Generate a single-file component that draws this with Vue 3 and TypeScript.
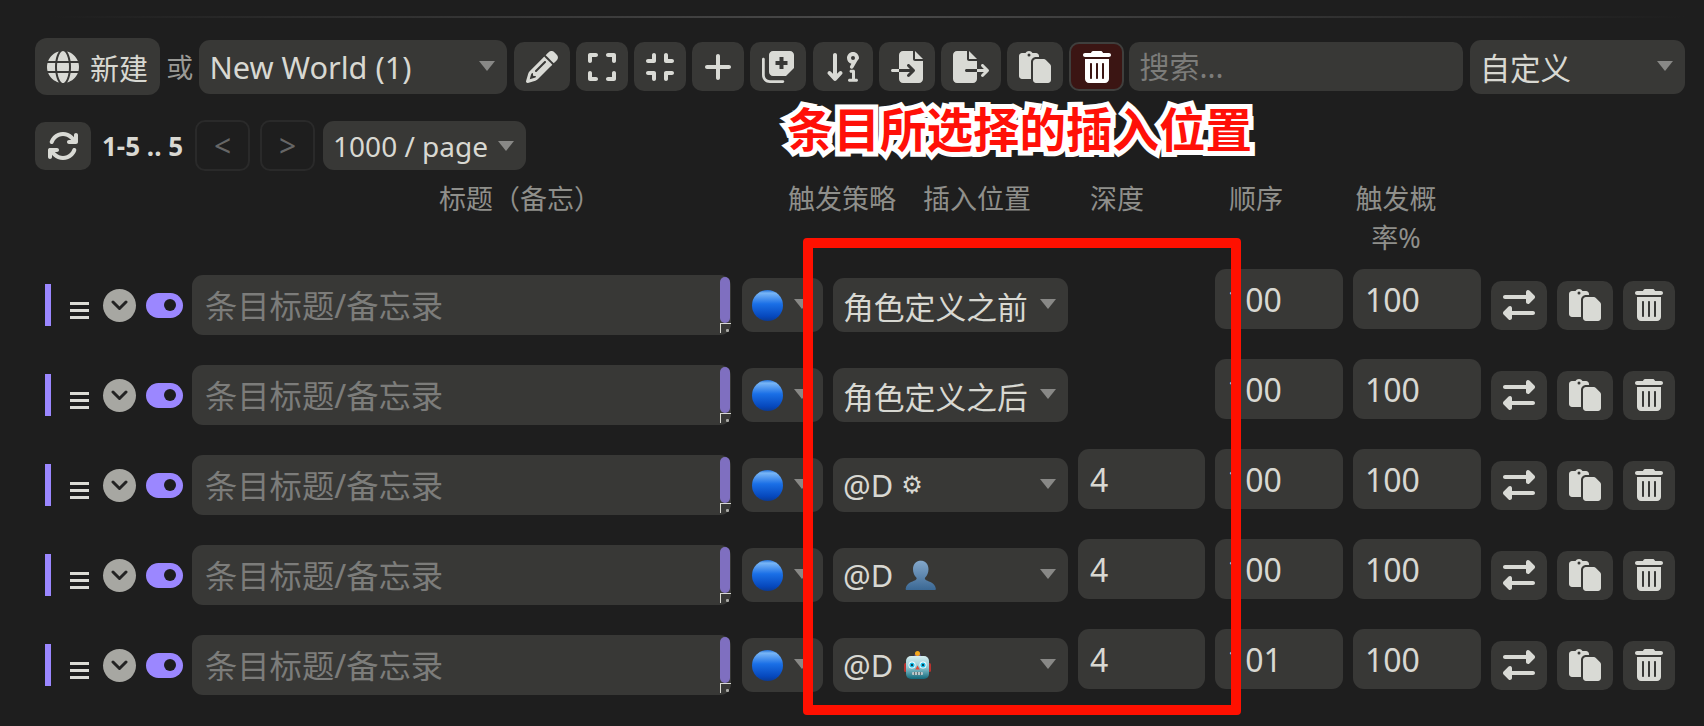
<template>
  <div class="page">
    <div class="top-line"></div>

    <!-- World selector toolbar -->
    <div class="toolbar">
      <button class="btn new-btn">
        <svg :width="32" height="32" :viewBox="`0 0 ${globe.w} 512`"><path :d="globe.d" /></svg>
        <span>新建</span>
      </button>
      <span class="or">或</span>
      <div class="select world-select">
        <span>New World (1)</span>
        <i class="caret"></i>
      </div>
      <button v-for="icon in toolIcons" :key="icon.name" class="btn icon-btn">
        <svg :width="icon.w / 16" height="32" :viewBox="`0 0 ${icon.w} 512`"><path :d="icon.d" fill-rule="evenodd" /></svg>
      </button>
      <button class="btn icon-btn danger">
        <svg :width="trash.w / 16" height="32" :viewBox="`0 0 ${trash.w} 512`"><path :d="trash.d" /></svg>
      </button>
      <input class="search" placeholder="搜索..." />
      <div class="select sort-select">
        <span>自定义</span>
        <i class="caret"></i>
      </div>
    </div>

    <!-- Pagination -->
    <div class="pager">
      <button class="btn icon-btn refresh">
        <svg width="32" height="32" :viewBox="`0 0 ${rotate.w} 512`"><path :d="rotate.d" /></svg>
      </button>
      <span class="range">1-5 .. 5</span>
      <div class="nav-btn first">&lt;</div>
      <div class="nav-btn">&gt;</div>
      <div class="select size-select">
        <span>1000 / page</span>
        <i class="caret"></i>
      </div>
    </div>

    <div class="table-head">
      <span>标题（备忘）</span>
      <span>触发策略</span>
      <span>插入位置</span>
      <span>深度</span>
      <span>顺序</span>
      <span class="prob-head">触发概率%</span>
    </div>

    <div class="entries">
      <div v-for="(entry, i) in entries" :key="i" class="entry">
        <i class="state-bar"></i>
        <span class="drag">
          <i></i><i></i><i></i>
        </span>
        <span class="fold">
          <svg width="17" height="11" viewBox="0 0 17 11"><path d="M2 2l6.500 6.500L15 2" /></svg>
        </span>
        <span class="toggle"><i></i></span>

        <div class="title-box">
          <input class="title-input" placeholder="条目标题/备忘录" />
          <i class="scroll-thumb"></i>
          <i class="resize-grip"></i>
        </div>

        <div class="select strategy">
          <svg class="ball" width="31" height="31" viewBox="0 0 31 31">
            <defs>
              <linearGradient id="ballFill" x1="0" y1="0" x2="0" y2="1">
                <stop offset="0" stop-color="#1f6fd8" />
                <stop offset="0.1" stop-color="#79b6f6" />
                <stop offset="0.45" stop-color="#1a6fe6" />
                <stop offset="0.85" stop-color="#0648bd" />
                <stop offset="1" stop-color="#0a3a94" />
              </linearGradient>
            </defs>
            <circle cx="15.5" cy="15.5" r="15.500" fill="url(#ballFill)" />
          </svg>
          <i class="caret"></i>
        </div>

        <div class="select position">
          <span class="pos-label">
            {{ entry.label }}
            <span v-if="entry.role === 'system'" class="gear">⚙</span>
            <svg v-if="entry.role === 'user'" class="role-icon" width="31" height="31" viewBox="0 0 31 31">
              <defs>
                <linearGradient id="userFill" x1="0" y1="0" x2="0" y2="1">
                  <stop offset="0" stop-color="#84a8cb" />
                  <stop offset="1" stop-color="#3b6894" />
                </linearGradient>
              </defs>
              <path fill="url(#userFill)" d="M15.500 0.500c4.800 0 8 3.800 8 8.800 0 3.400-1.400 6.500-3.300 8.300-.7.800-.3 2 1 2.700 3.300 1.700 8.500 2.500 9.600 8.200 .2 1-.3 1.500-1.200 1.500H1.900c-.9 0-1.400-.5-1.200-1.500 1.100-5.700 6.300-6.500 9.600-8.200 1.300-.7 1.700-1.900 1-2.700-1.900-1.800-3.300-4.900-3.300-8.300 0-5 3.200-8.800 8-8.800z" />
            </svg>
            <svg v-if="entry.role === 'bot'" class="role-icon bot" width="27" height="28" viewBox="0 0 27 28">
              <defs>
                <linearGradient id="botFill" x1="0" y1="0" x2="0" y2="1">
                  <stop offset="0" stop-color="#d6eef0" />
                  <stop offset="0.5" stop-color="#8cc6d0" />
                  <stop offset="1" stop-color="#11687a" />
                </linearGradient>
              </defs>
              <rect x="0" y="12" width="3.500" height="9" rx="1.500" fill="#b8322e" />
              <rect x="23.500" y="12" width="3.500" height="9" rx="1.500" fill="#b8322e" />
              <rect x="10.500" y="3" width="6" height="3" rx="1" fill="#6d54a8" />
              <circle cx="13.500" cy="2.500" r="2.500" fill="#f4a81c" />
              <rect x="2" y="5" width="23" height="23" rx="5" fill="url(#botFill)" />
              <circle cx="8" cy="14" r="3.500" fill="#fff" />
              <circle cx="19" cy="14" r="3.500" fill="#fff" />
              <circle cx="8" cy="14" r="2.600" fill="#1cc3f0" />
              <circle cx="19" cy="14" r="2.600" fill="#1cc3f0" />
              <circle cx="8" cy="14" r="1.200" fill="#12414f" />
              <circle cx="19" cy="14" r="1.200" fill="#12414f" />
              <path d="M13.500 14.500l2.300 4h-4.600z" fill="#e0483a" />
              <rect x="8" y="21" width="11" height="3" rx="1" fill="#b9c6c8" />
              <path d="M10.500 21v3M13.500 21v3M16.500 21v3" stroke="#4b5f64" stroke-width="0.800" fill="none" />
            </svg>
          </span>
          <i class="caret"></i>
        </div>

        <div class="depth-cell">
          <input v-if="entry.depth" class="num" :value="entry.depth" />
        </div>
        <input class="num" :value="entry.order" />
        <input class="num" value="100" />

        <div class="row-actions">
          <button v-for="icon in rowIcons" :key="icon.name" class="btn row-btn">
            <svg :width="icon.w / 16" height="32" :viewBox="`0 0 ${icon.w} 512`"><path :d="icon.d" /></svg>
          </button>
        </div>
      </div>
    </div>

    <!-- Annotation drawn on top of the screenshot -->
    <div class="note">条目所选择的插入位置</div>
    <div class="note-box"></div>
  </div>
</template>

<script setup lang="ts">
interface Icon {
  name: string;
  w: number;
  d: string;
}

interface Entry {
  label: string;
  role?: 'system' | 'user' | 'bot';
  depth?: number;
  order: number;
}

const globe: Icon = {
  name: 'globe',
  w: 512,
  d: 'M352 256c0 22.2-1.2 43.6-3.3 64l-185.3 0c-2.2-20.4-3.3-41.8-3.3-64s1.2-43.6 3.3-64l185.3 0c2.2 20.4 3.3 41.8 3.3 64zm28.8-64l123.1 0c5.3 20.5 8.1 41.9 8.1 64s-2.8 43.5-8.1 64l-123.1 0c2.1-20.6 3.2-42 3.2-64s-1.1-43.4-3.2-64zm112.6-32l-116.7 0c-10-63.9-29.8-117.4-55.3-151.6c78.3 20.7 142 77.5 171.9 151.6zm-149.1 0l-176.6 0c6.1-36.4 15.5-68.6 27-94.7c10.5-23.6 22.2-40.7 33.5-51.5C239.4 3.2 248.7 0 256 0s16.6 3.2 27.8 13.8c11.3 10.8 23 27.9 33.5 51.5c11.6 26 20.9 58.2 27 94.7zm-209 0L18.6 160C48.6 85.9 112.2 29.1 190.6 8.4C165.1 42.6 145.3 96.1 135.3 160zM8.1 192l123.1 0c-2.1 20.6-3.2 42-3.2 64s1.1 43.4 3.2 64L8.1 320C2.8 299.5 0 278.1 0 256s2.8-43.5 8.1-64zM194.7 446.6c-11.6-26-20.9-58.2-27-94.6l176.6 0c-6.1 36.4-15.5 68.6-27 94.6c-10.5 23.6-22.2 40.7-33.5 51.5C272.6 508.8 263.3 512 256 512s-16.6-3.2-27.8-13.8c-11.3-10.8-23-27.9-33.5-51.5zM135.3 352c10 63.9 29.8 117.4 55.3 151.6C112.2 482.9 48.6 426.1 18.6 352l116.7 0zm358.1 0c-30 74.1-93.6 130.9-171.9 151.6c25.5-34.2 45.2-87.7 55.3-151.6l116.7 0z',
};

const trash: Icon = {
  name: 'trash',
  w: 448,
  d: 'M135.2 17.7C140.6 6.8 151.7 0 163.8 0L284.2 0c12.1 0 23.2 6.8 28.6 17.7L320 32l96 0c17.7 0 32 14.3 32 32s-14.3 32-32 32L32 96C14.3 96 0 81.7 0 64S14.3 32 32 32l96 0 7.2-14.3zM32 128l384 0 0 320c0 35.3-28.7 64-64 64L96 512c-35.3 0-64-28.7-64-64l0-320zm96 64c-8.8 0-16 7.2-16 16l0 224c0 8.8 7.2 16 16 16s16-7.2 16-16l0-224c0-8.8-7.2-16-16-16zm96 0c-8.8 0-16 7.2-16 16l0 224c0 8.8 7.2 16 16 16s16-7.2 16-16l0-224c0-8.8-7.2-16-16-16zm96 0c-8.8 0-16 7.2-16 16l0 224c0 8.8 7.2 16 16 16s16-7.2 16-16l0-224c0-8.800-7.2-16-16-16z',
};

const paste: Icon = {
  name: 'paste',
  w: 512,
  d: 'M160 0c-23.7 0-44.4 12.9-55.4 32L48 32C21.5 32 0 53.5 0 80L0 400c0 26.5 21.5 48 48 48l144 0 0-272c0-44.2 35.8-80 80-80l48 0 0-16c0-26.5-21.5-48-48-48l-56.6 0C204.4 12.9 183.7 0 160 0zM272 128c-26.5 0-48 21.5-48 48l0 272 0 16c0 26.500 21.5 48 48 48l192 0c26.5 0 48-21.5 48-48l0-220.1c0-12.7-5.1-24.9-14.1-33.9l-67.9-67.9c-9-9-21.2-14.1-33.9-14.1L320 128l-48 0zM160 40a24 24 0 1 1 0 48 24 24 0 1 1 0-48z',
};

const rotate: Icon = {
  name: 'rotate',
  w: 512,
  d: 'M105.1 202.6c7.7-21.8 20.2-42.3 37.8-59.8c62.5-62.5 163.8-62.5 226.3 0L386.3 160 352 160c-17.7 0-32 14.3-32 32s14.3 32 32 32l111.5 0c0 0 0 0 0 0l.4 0c17.7 0 32-14.3 32-32l0-112c0-17.7-14.3-32-32-32s-32 14.3-32 32l0 35.2L414.4 97.6c-87.5-87.5-229.3-87.5-316.8 0C73.2 122 55.6 150.7 44.8 181.4c-5.9 16.7 2.9 34.9 19.5 40.8s34.9-2.9 40.8-19.5zM39 289.3c-5 1.5-9.8 4.2-13.7 8.2c-4 4-6.7 8.8-8.1 14c-.3 1.2-.6 2.5-.8 3.8c-.3 1.7-.4 3.4-.4 5.1L16 432c0 17.7 14.3 32 32 32s32-14.3 32-32l0-35.1 17.6 17.5c0 0 0 0 0 0c87.5 87.4 229.3 87.4 316.7 0c24.4-24.4 42.1-53.1 52.9-83.8c5.9-16.7-2.9-34.9-19.5-40.8s-34.9 2.9-40.8 19.5c-7.7 21.8-20.2 42.3-37.8 59.8c-62.5 62.5-163.8 62.5-226.3 0l-.1-.1L125.6 352l34.4 0c17.7 0 32-14.3 32-32s-14.3-32-32-32L48.4 288c-1.6 0-3.2 .1-4.8 .3s-3.1 .5-4.6 1z',
};

const toolIcons: Icon[] = [
  {
    name: 'pencil',
    w: 512,
    d: 'M410.3 231l11.3-11.3-33.9-33.9-62.1-62.1L291.7 89.8l-11.3 11.3-22.6 22.6L58.6 322.9c-10.4 10.4-18 23.3-22.2 37.4L1 480.7c-2.5 8.4-.2 17.5 6.1 23.7s15.3 8.5 23.7 6.1l120.3-35.4c14.1-4.2 27-11.8 37.4-22.2L387.7 253.7 410.3 231zM160 399.4l-9.1 22.7c-4 3.1-8.5 5.4-13.3 6.9L59.4 452l23-78.1c1.4-4.9 3.8-9.4 6.9-13.3l22.7-9.1 0 32c0 8.8 7.2 16 16 16l32 0zM362.7 18.7L348.3 33.2 325.7 55.8 314.3 67.1l33.9 33.9 62.1 62.1 33.9 33.9 11.3-11.3 22.6-22.6 14.5-14.5c25-25 25-65.5 0-90.5L453.3 18.7c-25-25-65.5-25-90.5 0zm-47.4 168l-144 144c-6.2 6.2-16.4 6.2-22.6 0s-6.2-16.4 0-22.6l144-144c6.2-6.2 16.4-6.2 22.6 0s6.2 16.4 0 22.6z',
  },
  {
    name: 'expand',
    w: 448,
    d: 'M32 32C14.3 32 0 46.3 0 64l0 96c0 17.7 14.3 32 32 32s32-14.3 32-32l0-64 64 0c17.7 0 32-14.3 32-32s-14.3-32-32-32L32 32zM64 352c0-17.7-14.3-32-32-32s-32 14.3-32 32l0 96c0 17.7 14.3 32 32 32l96 0c17.7 0 32-14.3 32-32s-14.3-32-32-32l-64 0 0-64zM320 32c-17.7 0-32 14.3-32 32s14.3 32 32 32l64 0 0 64c0 17.7 14.3 32 32 32s32-14.3 32-32l0-96c0-17.7-14.3-32-32-32l-96 0zM448 352c0-17.7-14.3-32-32-32s-32 14.3-32 32l0 64-64 0c-17.7 0-32 14.3-32 32s14.3 32 32 32l96 0c17.7 0 32-14.3 32-32l0-96z',
  },
  {
    name: 'compress',
    w: 448,
    d: 'M160 64c0-17.7-14.3-32-32-32s-32 14.3-32 32l0 64-64 0c-17.7 0-32 14.3-32 32s14.3 32 32 32l96 0c17.7 0 32-14.3 32-32l0-96zM32 320c-17.7 0-32 14.3-32 32s14.3 32 32 32l64 0 0 64c0 17.7 14.3 32 32 32s32-14.3 32-32l0-96c0-17.7-14.3-32-32-32l-96 0zM352 64c0-17.7-14.3-32-32-32s-32 14.3-32 32l0 96c0 17.7 14.3 32 32 32l96 0c17.7 0 32-14.3 32-32s-14.3-32-32-32l-64 0 0-64zM320 320c-17.7 0-32 14.3-32 32l0 96c0 17.7 14.3 32 32 32s32-14.3 32-32l0-64 64 0c17.7 0 32-14.3 32-32s-14.3-32-32-32l-96 0z',
  },
  {
    name: 'plus',
    w: 448,
    d: 'M256 80c0-17.7-14.3-32-32-32s-32 14.3-32 32l0 144L48 224c-17.7 0-32 14.3-32 32s14.3 32 32 32l144 0 0 144c0 17.7 14.3 32 32 32s32-14.3 32-32l0-144 144 0c17.7 0 32-14.3 32-32s-14.3-32-32-32l-144 0 0-144z',
  },
  {
    name: 'duplicate',
    w: 512,
    d: 'M176 0h272c35 0 64 29 64 64v208L384 400H176c-35 0-64-29-64-64V64c0-35 29-64 64-64zM280 96v64h-64v64h64v64h64v-64h64v-64h-64V96zM0 128c0-12 10-22 22-22s22 10 22 22v256c0 46 36 82 82 82h208c12 0 22 10 22 22s-10 24-22 24H126C56 512 0 456 0 384z',
  },
  {
    name: 'sort',
    w: 576,
    d: 'M160 480c9 0 17.500-3.800 23.600-10.400l88-96c11.900-13 11.100-33.300-2-45.200s-33.300-11-45.200 2L192 365.700V64c0-17.700-14.300-32-32-32s-32 14.300-32 32v301.700l-32.400-35.300c-12-13-32.200-13.900-45.200-2s-13.900 32.200-2 45.200l88 96C142.500 476.200 151 480 160 480zM448 16c-53 0-96 43-96 96 0 44 30 81 70 92l-20 36c-8 14-3 32 11 40s32 3 40-11l62-108c18-28 29-32 29-49 0-53-43-96-96-96zm0 64a32 32 0 1 1 0 64 32 32 0 1 1 0-64zM416 300h40c13 0 24 11 24 24v120h24c13 0 24 11 24 24s-11 24-24 24H392c-13 0-24-11-24-24s11-24 24-24h40v-96h-16c-13 0-24-11-24-24s11-24 24-24z',
  },
  {
    name: 'import',
    w: 512,
    d: 'M128 64c0-35.300 28.700-64 64-64L352 0l0 128c0 17.700 14.300 32 32 32l128 0 0 288c0 35.300-28.700 64-64 64l-256 0c-35.300 0-64-28.700-64-64l0-112 174.100 0-39 39c-9.400 9.400-9.400 24.600 0 33.900s24.600 9.400 33.900 0l80-80c9.400-9.400 9.400-24.600 0-33.900l-80-80c-9.400-9.400-24.600-9.400-33.900 0s-9.400 24.600 0 33.900l39 39L128 288l0-224zm0 224l0 48L24 336c-13.300 0-24-10.700-24-24s10.700-24 24-24l104 0zM512 128l-128 0L384 0 512 128z',
  },
  {
    name: 'export',
    w: 576,
    d: 'M0 64C0 28.700 28.700 0 64 0L224 0l0 128c0 17.700 14.300 32 32 32l128 0 0 128-168 0c-13.300 0-24 10.700-24 24s10.700 24 24 24l168 0 0 112c0 35.300-28.700 64-64 64L64 512c-35.300 0-64-28.700-64-64L0 64zM384 336l0-48 110.100 0-39-39c-9.400-9.400-9.400-24.600 0-33.900s24.600-9.400 33.900 0l80 80c9.400 9.400 9.400 24.600 0 33.900l-80 80c-9.400 9.400-24.600 9.400-33.900 0s-9.400-24.600 0-33.900l39-39L384 336zm0-208l-128 0L256 0 384 128z',
  },
  paste,
];

const rowIcons: Icon[] = [
  {
    name: 'swap',
    w: 512,
    d: 'M32 96l336 0 0-48c0-12.900 7.800-24.600 19.800-29.600s25.700-2.200 34.900 6.900l80 80c6 6 9.400 14.100 9.400 22.600s-3.400 16.600-9.400 22.600l-80 80c-9.200 9.200-22.900 11.900-34.900 6.900s-19.800-16.600-19.800-29.600l0-48L32 160c-17.700 0-32-14.300-32-32s14.300-32 32-32zM480 352c17.700 0 32 14.300 32 32s-14.300 32-32 32l-336 0 0 48c0 12.900-7.800 24.600-19.800 29.600s-25.700 2.200-34.900-6.900l-80-80c-6-6-9.400-14.100-9.400-22.600s3.400-16.600 9.400-22.600l80-80c9.200-9.200 22.900-11.900 34.900-6.900s19.800 16.600 19.800 29.600l0 48 336 0z',
  },
  paste,
  trash,
];

const entries: Entry[] = [
  { label: '角色定义之前', order: 100 },
  { label: '角色定义之后', order: 100 },
  { label: '@D', role: 'system', depth: 4, order: 100 },
  { label: '@D', role: 'user', depth: 4, order: 100 },
  { label: '@D', role: 'bot', depth: 4, order: 101 },
];
</script>

<style>
html,
body {
  background: #1e1e1e;
  overflow: hidden;
}
</style>

<style scoped>
.page {
  position: relative;
  width: 1704px;
  height: 726px;
  box-sizing: border-box;
  padding: 16px 0 0 35px;
  background: #1e1e1e;
  font-family: "Noto Sans", "Noto Sans CJK SC", sans-serif;
  color: #d8d8d2;
  overflow: hidden;
}

.top-line {
  height: 2px;
  margin: 0 19px 20px 15px;
  background: linear-gradient(90deg, #1e1e1e 0%, #4a4a4a 50%, #1e1e1e 100%);
}

button {
  font: inherit;
  color: inherit;
  border: none;
}

.btn svg path {
  fill: #d9dad5;
}

.toolbar {
  display: flex;
  align-items: center;
  gap: 6.2px;
  height: 57px;
}

.btn {
  display: flex;
  align-items: center;
  justify-content: center;
  background: #383836;
  border-radius: 10px;
  padding: 0;
}

.new-btn {
  width: 125px;
  height: 57px;
  gap: 11px;
  font-size: 29px;
  border-radius: 12px;
}

.or {
  font-size: 27px;
  color: #9a9a96;
}

.icon-btn {
  height: 49px;
  padding: 0 12px;
}

.danger {
  width: 55px;
  box-sizing: border-box;
  padding: 0;
  background: #3b1513;
  border: 2px solid #3f3f3d;
}

.btn.danger svg path {
  fill: #fff;
}

.select {
  display: flex;
  align-items: center;
  justify-content: space-between;
  box-sizing: border-box;
  height: 54px;
  padding: 0 12px 0 10px;
  background: #383836;
  border-radius: 11px;
  font-size: 30px;
}

.caret {
  flex: none;
  width: 0;
  height: 0;
  border-left: 8px solid transparent;
  border-right: 8px solid transparent;
  border-top: 10px solid #888886;
  margin-bottom: 2px;
}

.world-select {
  width: 308px;
  font-size: 30.7px;
}

.search {
  width: 334px;
  height: 49px;
  box-sizing: border-box;
  margin-left: -1px;
  padding: 0 10px;
  background: #383836;
  border: none;
  border-radius: 10px;
  outline: none;
  color: inherit;
  font: inherit;
  font-size: 30px;
}

.search::placeholder,
.title-input::placeholder {
  color: #7c7c7a;
  opacity: 1;
}

.sort-select {
  width: 215px;
  font-size: 30.5px;
}

.pager {
  display: flex;
  align-items: center;
  height: 51px;
  margin-top: 25px;
}

.refresh {
  width: 56px;
  height: 48px;
  padding: 0;
}

.range {
  margin-left: 11px;
  font-size: 26px;
  font-weight: 700;
}

.nav-btn {
  display: flex;
  align-items: center;
  justify-content: center;
  box-sizing: border-box;
  width: 55px;
  height: 51px;
  margin-left: 10px;
  border: 2px solid #2a2a2a;
  border-radius: 10px;
  font-size: 30px;
  color: #666;
}

.nav-btn.first {
  margin-left: 12px;
}

.size-select {
  width: 203px;
  height: 49px;
  margin-left: 8px;
  font-size: 28px;
}

.size-select .caret {
  margin-bottom: 0;
}

.table-head {
  display: grid;
  grid-template-columns: 349px 135px 167px 139px 125px 84px;
  margin: 8px 0 12px 404px;
  height: 78px;
  font-size: 27px;
  line-height: 39px;
  color: #8f8f8b;
}

.prob-head {
  text-align: center;
}

.entries {
  display: flex;
  flex-direction: column;
  gap: 18px;
  margin-left: 10px;
}

.entry {
  display: flex;
  align-items: center;
  gap: 10px;
}

.state-bar {
  width: 6px;
  height: 42px;
  background: #9b87ff;
}

.drag {
  display: flex;
  flex-direction: column;
  gap: 4px;
  width: 19px;
  margin: 10px 4px 0 9px;
}

.drag i {
  height: 3px;
  background: #dcdcd6;
}

.fold {
  display: flex;
  align-items: center;
  justify-content: center;
  width: 33px;
  height: 33px;
  border-radius: 50%;
  background: #a7a7a2;
}

.fold svg path {
  fill: none;
  stroke: #232323;
  stroke-width: 3;
  stroke-linecap: round;
  stroke-linejoin: round;
}

.toggle {
  display: flex;
  align-items: center;
  justify-content: flex-end;
  box-sizing: border-box;
  width: 37px;
  height: 25px;
  padding-right: 7px;
  border-radius: 13px;
  background: #9b87ff;
}

.toggle i {
  width: 12px;
  height: 12px;
  border-radius: 50%;
  background: #1e1e1e;
}

.title-box {
  position: relative;
  width: 539px;
  height: 60px;
  margin-left: -1px;
  border-radius: 11px;
  background: #383836;
}

.title-input {
  width: 100%;
  height: 100%;
  box-sizing: border-box;
  padding: 0 13px;
  background: transparent;
  border: none;
  outline: none;
  color: inherit;
  font: inherit;
  font-size: 32.3px;
}

.scroll-thumb {
  position: absolute;
  top: 2px;
  right: 1px;
  width: 10px;
  height: 46px;
  border-radius: 5px;
  background: #7f6fc0;
}

.resize-grip {
  position: absolute;
  top: 48px;
  right: 0;
  box-sizing: border-box;
  width: 11px;
  height: 10px;
  border-top: 1px solid #d8d8d2;
  border-left: 1px solid #d8d8d2;
}

.resize-grip::after {
  content: "";
  position: absolute;
  right: 2px;
  bottom: 1px;
  width: 3px;
  height: 3px;
  background: #a9a9a5;
  border-radius: 1px;
}

.strategy {
  width: 81px;
  margin-left: 1px;
  padding: 0 13px 0 10px;
}

.position {
  width: 235px;
  font-size: 30.8px;
}

.pos-label {
  display: flex;
  align-items: center;
  gap: 12px;
}

.gear {
  font-family: "DejaVu Sans", sans-serif;
  font-size: 24px;
  line-height: 1;
  margin-left: -4px;
}

.role-icon {
  flex: none;
}

.role-icon.bot {
  margin-left: -1px;
}

.depth-cell {
  width: 127px;
  height: 60px;
  margin-bottom: 12px;
}

.num {
  width: 128px;
  height: 60px;
  box-sizing: border-box;
  margin-bottom: 12px;
  padding: 0 12px;
  background: #383836;
  border: none;
  border-radius: 11px;
  outline: none;
  color: inherit;
  font: inherit;
  font-size: 32px;
}

.depth-cell .num {
  width: 127px;
}

.row-actions {
  display: flex;
  gap: 10px;
}

.row-btn {
  height: 49px;
  padding: 0 12px;
}

.note {
  position: absolute;
  left: 787px;
  top: 97px;
  font-size: 46.5px;
  line-height: 64px;
  font-weight: 700;
  color: #ff1008;
  -webkit-text-stroke: 10px #fff;
  paint-order: stroke fill;
  white-space: nowrap;
}

.note-box {
  position: absolute;
  left: 803px;
  top: 238px;
  width: 438px;
  height: 477px;
  box-sizing: border-box;
  border: 10px solid #ff1000;
  border-radius: 4px;
}
</style>
